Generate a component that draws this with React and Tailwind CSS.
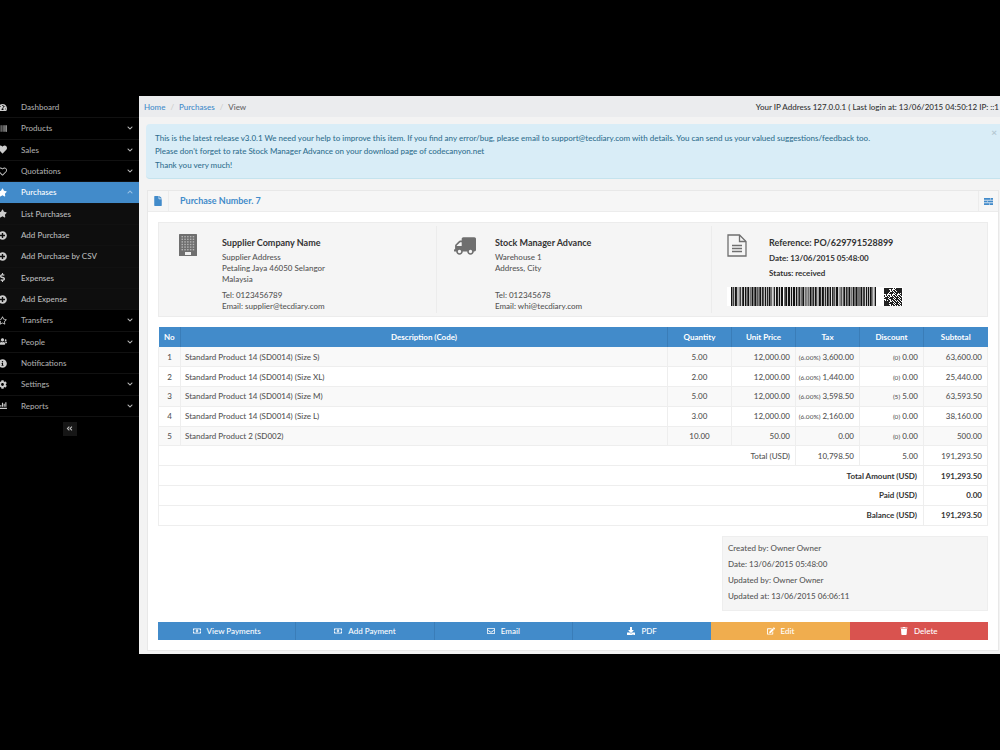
import {
    FaTachometerAlt, FaBarcode, FaHeart, FaRegHeart, FaStar, FaRegStar, FaPlusCircle, FaDollarSign,
    FaUsers, FaInfoCircle, FaCog, FaChartBar, FaChevronDown, FaChevronUp, FaAngleDoubleLeft,
    FaTruck, FaFile, FaRegMoneyBillAlt, FaRegEnvelope,
    FaDownload, FaEdit, FaTrash
} from 'react-icons/fa'

const menu = [
    { label: 'Dashboard', icon: FaTachometerAlt },
    { label: 'Products', icon: FaBarcode, arrow: true },
    { label: 'Sales', icon: FaHeart, arrow: true },
    { label: 'Quotations', icon: FaRegHeart, arrow: true },
    { label: 'Purchases', icon: FaStar, arrow: true, active: true },
    { label: 'List Purchases', icon: FaStar, sub: true },
    { label: 'Add Purchase', icon: FaPlusCircle, sub: true },
    { label: 'Add Purchase by CSV', icon: FaPlusCircle, sub: true },
    { label: 'Expenses', icon: FaDollarSign, sub: true },
    { label: 'Add Expense', icon: FaPlusCircle, sub: true },
    { label: 'Transfers', icon: FaRegStar, arrow: true },
    { label: 'People', icon: FaUsers, arrow: true },
    { label: 'Notifications', icon: FaInfoCircle },
    { label: 'Settings', icon: FaCog, arrow: true },
    { label: 'Reports', icon: FaChartBar, arrow: true },
]

const rows = [
    ['1', 'Standard Product 14 (SD0014) (Size S)', '5.00', '12,000.00', '(6.00%)', '3,600.00', '(0)', '0.00', '63,600.00'],
    ['2', 'Standard Product 14 (SD0014) (Size XL)', '2.00', '12,000.00', '(6.00%)', '1,440.00', '(0)', '0.00', '25,440.00'],
    ['3', 'Standard Product 14 (SD0014) (Size M)', '5.00', '12,000.00', '(6.00%)', '3,598.50', '(5)', '5.00', '63,593.50'],
    ['4', 'Standard Product 14 (SD0014) (Size L)', '3.00', '12,000.00', '(6.00%)', '2,160.00', '(0)', '0.00', '38,160.00'],
    ['5', 'Standard Product 2 (SD002)', '10.00', '50.00', '', '0.00', '(0)', '0.00', '500.00'],
]

const buttons = [
    { label: 'View Payments', icon: FaRegMoneyBillAlt, color: 'bg-[#428bca] border-r border-[#3a7db8]' },
    { label: 'Add Payment', icon: FaRegMoneyBillAlt, color: 'bg-[#428bca] border-r border-[#3a7db8]' },
    { label: 'Email', icon: FaRegEnvelope, color: 'bg-[#428bca] border-r border-[#3a7db8]' },
    { label: 'PDF', icon: FaDownload, color: 'bg-[#428bca]' },
    { label: 'Edit', icon: FaEdit, color: 'bg-[#f0ad4e]' },
    { label: 'Delete', icon: FaTrash, color: 'bg-[#d9534f]' },
]

// bar widths for the drawn barcode, alternating black and white
const barPattern = [1.5, 0.7, 1, 0.7, 2, 0.8, 0.6, 0.8, 0.5, 0.6, 1, 1, 2, 0.8, 1.5, 0.8, 2, 1, 0.6, 0.6, 2, 0.8, 2.2, 0.8, 1.2, 0.8, 2, 0.8, 1.6, 1]

function Barcode() {
    const bars = []
    let x = 0
    let i = 0
    while (x < 146) {
        const w = barPattern[i % barPattern.length]
        if (i % 2 === 0) bars.push(<rect key={i} x={x} y="0" width={w} height="19" fill="#111" />)
        x += w
        i++
    }
    return <svg width="146" height="19" viewBox="0 0 146 19" className="block">{bars}</svg>
}

function QrCode() {
    const cells = []
    for (let r = 0; r < 25; r++) {
        for (let c = 0; c < 25; c++) {
            const inFinder = (r < 7 && c < 7) || (r < 7 && c > 17) || (r > 17 && c < 7)
            let on
            if (inFinder) {
                const y = r > 17 ? r - 18 : r
                const x = c > 17 ? c - 18 : c
                on = y === 0 || y === 6 || x === 0 || x === 6 || (y > 1 && y < 5 && x > 1 && x < 5)
            } else {
                on = ((r * r * 3 + c * 7 + r * c * 5 + c * c) % 7) % 2 === 0
            }
            if (on) cells.push(<rect key={r + '-' + c} x={c} y={r} width="1" height="1" fill="#222" />)
        }
    }
    return <svg width="18" height="18" viewBox="0 0 25 25" className="block" shapeRendering="crispEdges">{cells}</svg>
}

function BuildingIcon() {
    const windows = []
    for (let r = 0; r < 6; r++) {
        for (let c = 0; c < 5; c++) {
            windows.push(<rect key={r + '-' + c} x={2.5 + c * 2.8} y={2 + r * 2.6} width="1.5" height="1.4" fill="#b4b4b4" />)
        }
    }
    return (
        <svg width="18" height="22" viewBox="0 0 18 22" className="shrink-0">
            <rect width="18" height="22" rx="0.5" fill="#6f6f6f" />
            {windows}
            <rect x="6" y="18" width="6" height="3" fill="#eee" />
        </svg>
    )
}

function DocIcon() {
    return (
        <svg width="20" height="23" viewBox="0 0 20 23" fill="none" stroke="#6f6f6f" strokeWidth="1.3" className="shrink-0">
            <path d="M1 1h11.5L19 7.5V22H1z" />
            <path d="M12.5 1v6.5H19" />
            <path d="M5 11.5h10M5 14.5h10M5 17.5h10" />
        </svg>
    )
}

function BarsIcon() {
    return (
        <svg width="9" height="7" viewBox="0 0 9 7" className="block">
            <rect y="0" width="9" height="1.8" fill="#428bca" />
            <rect y="2.6" width="9" height="1.8" fill="#428bca" />
            <rect y="5.2" width="9" height="1.8" fill="#428bca" />
            <rect x="6" y="0" width="0.6" height="1.8" fill="#cfe2f3" />
            <rect x="3.4" y="2.6" width="0.6" height="1.8" fill="#cfe2f3" />
            <rect x="5" y="5.2" width="0.6" height="1.8" fill="#cfe2f3" />
        </svg>
    )
}

export default function App() {
    return (
        <div className="flex h-[750px] w-[1000px] overflow-hidden bg-black pt-24 pb-24 font-['Lato',sans-serif] text-[8px] font-medium text-[#555]">
            <div className="w-[139px] shrink-0 pt-px">
                {menu.map(item => {
                    const Icon = item.icon
                    return (
                        <div
                            key={item.label}
                            className={`flex h-[21.33px] items-center border-b border-[#111] pr-1.5 ${item.active ? 'bg-[#428bca] text-white' : item.sub ? 'bg-[#0e0e0e] text-[#bbb]' : 'text-[#aaa]'}`}
                        >
                            <span className="ml-[-2px] flex w-[23px] shrink-0 items-center">
                                <Icon size={9} className={item.active ? 'text-white' : 'text-[#ccc]'} />
                            </span>
                            <span className="flex-1">{item.label}</span>
                            {item.arrow && (item.active
                                ? <FaChevronUp size={6} className="text-[#9cc3e6]" />
                                : <FaChevronDown size={6} className="text-[#bbb]" />)}
                        </div>
                    )
                })}
                <div className="flex justify-center pt-[5px]">
                    <span className="flex h-3.5 w-3.5 items-center justify-center bg-[#161616]">
                        <FaAngleDoubleLeft size={7} className="text-[#bbb]" />
                    </span>
                </div>
            </div>

            <div className="flex-1 bg-[#f3f3f3]">
                <div className="flex h-[21px] items-center justify-between bg-[#ebecee] pl-[5px] pr-0.5">
                    <div className="flex gap-[5px]">
                        <span className="text-[#428bca]">Home</span>
                        <span className="text-[#ccc]">/</span>
                        <span className="text-[#428bca]">Purchases</span>
                        <span className="text-[#ccc]">/</span>
                        <span className="text-[#666]">View</span>
                    </div>
                    <div className="text-[#333]">Your IP Address 127.0.0.1 ( Last login at: 13/06/2015 04:50:12 IP: ::1</div>
                </div>

                <div className="relative ml-[7px] mt-[7px] h-[55px] rounded-l-sm border-b border-[#c5e3ee] bg-[#d9edf7] pl-[9px] pt-[8px] text-[#31708f]">
                    <p className="h-[13.3px] leading-[13.3px]">This is the latest release v3.0.1 We need your help to improve this item. If you find any error/bug, please email to support@tecdiary.com with details. You can send us your valued suggestions/feedback too.</p>
                    <p className="h-[13.3px] leading-[13.3px]">Please don't forget to rate Stock Manager Advance on your download page of codecanyon.net</p>
                    <p className="h-[13.3px] leading-[13.3px]">Thank you very much!</p>
                    <span className="absolute right-1 top-0.5 text-[10px] font-bold leading-3 text-[#b5c8d2]">×</span>
                </div>

                <div className="ml-2 mr-0.5 mt-[11px] h-[461px] border border-[#e8e8e8] bg-white">
                    <div className="flex h-[21px] items-center border-b border-[#ececec] bg-[#f6f6f6]">
                        <span className="flex h-full w-[21px] items-center justify-center border-r border-[#ececec]">
                            <FaFile size={10} className="text-[#428bca]" />
                        </span>
                        <span className="ml-[11px] flex-1 text-[9px] font-bold text-[#428bca]">Purchase Number. 7</span>
                        <span className="flex h-full w-[20px] items-center justify-center border-l border-[#ececec]">
                            <BarsIcon />
                        </span>
                    </div>

                    <div className="px-2.5 pt-2.5">
                        <div className="grid h-[95px] grid-cols-[278px_275px_1fr] border border-[#ececec] bg-[#f5f5f5] py-[3px]">
                            <div className="flex border-r border-[#ececec] pl-5 pt-2">
                                <BuildingIcon />
                                <div className="ml-[25px] leading-[11px]">
                                    <div className="mt-[3px] mb-[4px] text-[9px] font-bold text-[#333]">Supplier Company Name</div>
                                    <div>Supplier Address</div>
                                    <div>Petaling Jaya 46050 Selangor</div>
                                    <div>Malaysia</div>
                                    <div className="mt-[5px]">Tel: 0123456789</div>
                                    <div>Email: supplier@tecdiary.com</div>
                                </div>
                            </div>
                            <div className="flex border-r border-[#ececec] pl-[17px] pt-2">
                                <FaTruck size={22} className="mt-[1px] -scale-x-100 text-[#6f6f6f]" />
                                <div className="ml-[19px] leading-[11px]">
                                    <div className="mt-[3px] mb-[4px] text-[9px] font-bold text-[#333]">Stock Manager Advance</div>
                                    <div>Warehouse 1</div>
                                    <div>Address, City</div>
                                    <div className="h-[11px]"></div>
                                    <div className="mt-[5px]">Tel: 012345678</div>
                                    <div>Email: whi@tecdiary.com</div>
                                </div>
                            </div>
                            <div className="pl-[15px] pt-2">
                                <div className="flex h-[52px]">
                                    <DocIcon />
                                    <div className="ml-[22px] font-bold text-[#333]">
                                        <div className="mt-[3px] text-[9px] leading-[11px]">Reference: PO/629791528899</div>
                                        <div className="mt-[5px] leading-[11px]">Date: 13/06/2015 05:48:00</div>
                                        <div className="mt-[4px] leading-[11px]">Status: received</div>
                                    </div>
                                </div>
                                <div className="mt-[1px] flex w-[176px] items-center justify-between bg-white pl-1 pr-[1px]">
                                    <Barcode />
                                    <QrCode />
                                </div>
                            </div>
                        </div>

                        <table className="mt-[10px] w-[830px] table-fixed border-collapse">
                            <colgroup>
                                <col className="w-[22px]" />
                                <col />
                                <col className="w-16" />
                                <col className="w-16" />
                                <col className="w-16" />
                                <col className="w-16" />
                                <col className="w-16" />
                            </colgroup>
                            <thead>
                                <tr className="h-5 bg-[#428bca] font-bold text-white">
                                    {['No', 'Description (Code)', 'Quantity', 'Unit Price', 'Tax', 'Discount', 'Subtotal'].map(h => (
                                        <th key={h} className="border-r border-[#3a7db8] font-bold last:border-r-0">{h}</th>
                                    ))}
                                </tr>
                            </thead>
                            <tbody>
                                {rows.map((r, i) => (
                                    <tr key={r[0]} className={`h-[19.8px] border-b border-[#eee] ${i % 2 === 0 ? 'bg-[#f9f9f9]' : 'bg-white'}`}>
                                        <td className="border-x border-[#eee] text-center">{r[0]}</td>
                                        <td className="border-r border-[#eee] pl-1">{r[1]}</td>
                                        <td className="border-r border-[#eee] text-center">{r[2]}</td>
                                        <td className="border-r border-[#eee] pr-[5px] text-right">{r[3]}</td>
                                        <td className="border-r border-[#eee] pr-[5px] text-right"><span className="text-[6.5px]">{r[4]}</span> {r[5]}</td>
                                        <td className="border-r border-[#eee] pr-[5px] text-right"><span className="text-[6.5px]">{r[6]}</span> {r[7]}</td>
                                        <td className="border-r border-[#eee] pr-[5px] text-right">{r[8]}</td>
                                    </tr>
                                ))}
                                <tr className="h-[19.8px] border-b border-[#eee]">
                                    <td colSpan="4" className="border-x border-[#eee] pr-[5px] text-right">Total (USD)</td>
                                    <td className="border-r border-[#eee] pr-[5px] text-right">10,798.50</td>
                                    <td className="border-r border-[#eee] pr-[5px] text-right">5.00</td>
                                    <td className="border-r border-[#eee] pr-[5px] text-right">191,293.50</td>
                                </tr>
                                {[['Total Amount (USD)', '191,293.50'], ['Paid (USD)', '0.00'], ['Balance (USD)', '191,293.50']].map(t => (
                                    <tr key={t[0]} className="h-[19.8px] border-b border-[#eee] font-bold text-[#333]">
                                        <td colSpan="6" className="border-x border-[#eee] pr-[6px] text-right">{t[0]}</td>
                                        <td className="border-r border-[#eee] pr-[5px] text-right">{t[1]}</td>
                                    </tr>
                                ))}
                            </tbody>
                        </table>

                        <div className="ml-auto mt-[10px] h-[75px] w-[266px] border border-[#eee] bg-[#f5f5f5] pl-[5px] pt-[3px] leading-4">
                            <div>Created by: Owner Owner</div>
                            <div>Date: 13/06/2015 05:48:00</div>
                            <div>Updated by: Owner Owner</div>
                            <div>Updated at: 13/06/2015 06:06:11</div>
                        </div>

                        <div className="mt-[11px] grid h-[18px] w-[830px] grid-cols-6">
                            {buttons.map(b => {
                                const Icon = b.icon
                                return (
                                    <div key={b.label} className={`flex items-center justify-center gap-1.5 text-white ${b.color}`}>
                                        <Icon size={8} />
                                        <span>{b.label}</span>
                                    </div>
                                )
                            })}
                        </div>
                    </div>
                </div>
            </div>
        </div>
    )
}
